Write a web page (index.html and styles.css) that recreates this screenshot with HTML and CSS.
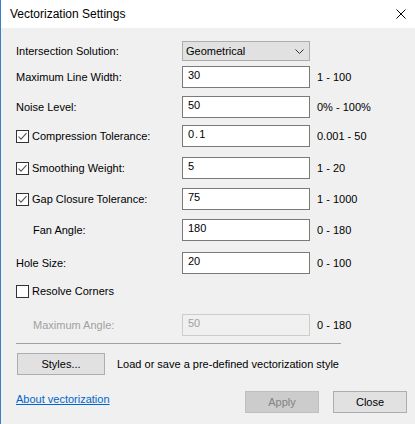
FILE: index.html
```html
<!DOCTYPE html>
<html>
<head>
<meta charset="utf-8">
<link rel="stylesheet" href="styles.css">
</head>
<body>
<div class="window">
  <div class="titlebar">
    <span class="title">Vectorization Settings</span>
    <svg class="close-x" width="10" height="10" viewBox="0 0 10 10"><path d="M0.5 0.5 L9.5 9.5 M9.5 0.5 L0.5 9.5" stroke="#000" stroke-width="1" fill="none"/></svg>
  </div>
  <div class="content">
    <div class="row row-select">
      <div class="label">Intersection Solution:</div>
      <div class="select"><span>Geometrical</span><svg width="9" height="5" viewBox="0 0 9 5"><path d="M0.5 0.5 L4.5 4.5 L8.5 0.5" stroke="#333" stroke-width="1" fill="none"/></svg></div>
    </div>
    <div class="row mt5">
      <div class="label">Maximum Line Width:</div>
      <div class="field">30</div>
      <div class="range">1 - 100</div>
    </div>
    <div class="row mt8">
      <div class="label">Noise Level:</div>
      <div class="field">50</div>
      <div class="range">0% - 100%</div>
    </div>
    <div class="row mt7">
      <div class="label check-label"><svg class="cb" width="13" height="13" viewBox="0 0 13 13"><rect x="0.5" y="0.5" width="12" height="12" fill="#fff" stroke="#333"/><path d="M2.5 6.5 L5 9.2 L10.5 3.2" stroke="#555" stroke-width="1.1" fill="none"/></svg><span>Compression Tolerance:</span></div>
      <div class="field"><span class="spaced">0.1</span></div>
      <div class="range">0.001 - 50</div>
    </div>
    <div class="row mt10">
      <div class="label check-label"><svg class="cb" width="13" height="13" viewBox="0 0 13 13"><rect x="0.5" y="0.5" width="12" height="12" fill="#fff" stroke="#333"/><path d="M2.5 6.5 L5 9.2 L10.5 3.2" stroke="#555" stroke-width="1.1" fill="none"/></svg><span>Smoothing Weight:</span></div>
      <div class="field">5</div>
      <div class="range">1 - 20</div>
    </div>
    <div class="row mt9">
      <div class="label check-label"><svg class="cb" width="13" height="13" viewBox="0 0 13 13"><rect x="0.5" y="0.5" width="12" height="12" fill="#fff" stroke="#333"/><path d="M2.5 6.5 L5 9.2 L10.5 3.2" stroke="#555" stroke-width="1.1" fill="none"/></svg><span>Gap Closure Tolerance:</span></div>
      <div class="field">75</div>
      <div class="range">1 - 1000</div>
    </div>
    <div class="row mt9">
      <div class="label indent">Fan Angle:</div>
      <div class="field">180</div>
      <div class="range">0 - 180</div>
    </div>
    <div class="row mt11">
      <div class="label">Hole Size:</div>
      <div class="field">20</div>
      <div class="range">0 - 100</div>
    </div>
    <div class="row row-check mt11">
      <div class="label check-label"><svg class="cb" width="13" height="13" viewBox="0 0 13 13"><rect x="0.5" y="0.5" width="12" height="12" fill="#fff" stroke="#333"/></svg><span>Resolve Corners</span></div>
    </div>
    <div class="row mt16">
      <div class="label indent disabled">Maximum Angle:</div>
      <div class="field field-disabled">50</div>
      <div class="range">0 - 180</div>
    </div>
    <div class="separator"></div>
    <div class="styles-row">
      <button class="btn btn-styles">Styles...</button>
      <span class="hint">Load or save a pre-defined vectorization style</span>
    </div>
    <div class="bottom-row">
      <a class="link" href="#">About vectorization</a>
      <div class="buttons">
        <button class="btn btn-disabled">Apply</button>
        <button class="btn">Close</button>
      </div>
    </div>
  </div>
</div>
</body>
</html>
```

FILE: styles.css
```css
* { box-sizing: border-box; }
html, body { margin: 0; padding: 0; }
body {
  font-family: "Liberation Sans", Arial, sans-serif;
  font-size: 11px;
  line-height: 13px;
  color: #000;
  background: #f0f0f0;
}
.window {
  width: 415px;
  height: 424px;
  border-left: 1px solid #3c7fc8;
  background: #f0f0f0;
  display: flex;
  flex-direction: column;
  overflow: hidden;
}
.titlebar {
  height: 28px;
  flex: none;
  background: #fff;
  display: flex;
  align-items: center;
  justify-content: space-between;
  padding: 0 9px 0 9px;
}
.title { font-size: 12px; line-height: 14px; }
.close-x { display: block; }
.content {
  padding: 13px 8px 0 15px;
  display: flex;
  flex-direction: column;
}
.row {
  display: grid;
  grid-template-columns: 166px 128px auto;
  align-items: center;
  height: 22px;
}
.row-select { height: 20px; }
.row-check { height: 13px; }
.mt5 { margin-top: 5px; }
.mt7 { margin-top: 7px; }
.mt8 { margin-top: 8px; }
.mt9 { margin-top: 9px; }
.mt10 { margin-top: 10px; }
.mt11 { margin-top: 11px; }
.mt16 { margin-top: 16px; }
.label { white-space: nowrap; }
.check-label { display: flex; align-items: center; gap: 3px; }
.cb { display: block; flex: none; }
.indent { padding-left: 17px; }
.disabled { color: #a0a0a0; }
.select {
  height: 20px;
  border: 1px solid #adadad;
  background: #e1e1e1;
  display: flex;
  align-items: center;
  justify-content: space-between;
  padding: 0 5px 0 3px;
}
.select svg { display: block; }
.field {
  height: 22px;
  border: 1px solid #7a7a7a;
  background: #fff;
  padding: 2px 5px 0;
}
.field-disabled {
  background: #f0f0f0;
  border-color: #cccccc;
  color: #a0a0a0;
}
.spaced { letter-spacing: 1px; }
.range { padding-left: 7px; white-space: nowrap; }
.separator {
  margin-top: 7px;
  width: 325px;
  height: 1px;
  background: #a0a0a0;
}
.styles-row {
  margin-top: 9px;
  display: flex;
  align-items: center;
  height: 22px;
}
.btn {
  font-family: inherit;
  font-size: 11px;
  line-height: 13px;
  color: #000;
  height: 22px;
  width: 74px;
  border: 1px solid #adadad;
  background: #e1e1e1;
  padding: 0;
  margin: 0;
  border-radius: 0;
}
.btn-styles { width: 88px; margin-left: 1px; }
.hint { margin-left: 12px; white-space: nowrap; }
.bottom-row {
  margin-top: 16px;
  display: flex;
  align-items: flex-start;
  justify-content: space-between;
}
.link {
  color: #0066cc;
  text-decoration: underline;
  margin-top: 2px;
}
.buttons { display: flex; gap: 14px; }
.btn-disabled {
  background: #cccccc;
  border-color: #bfbfbf;
  color: #838383;
}
```
